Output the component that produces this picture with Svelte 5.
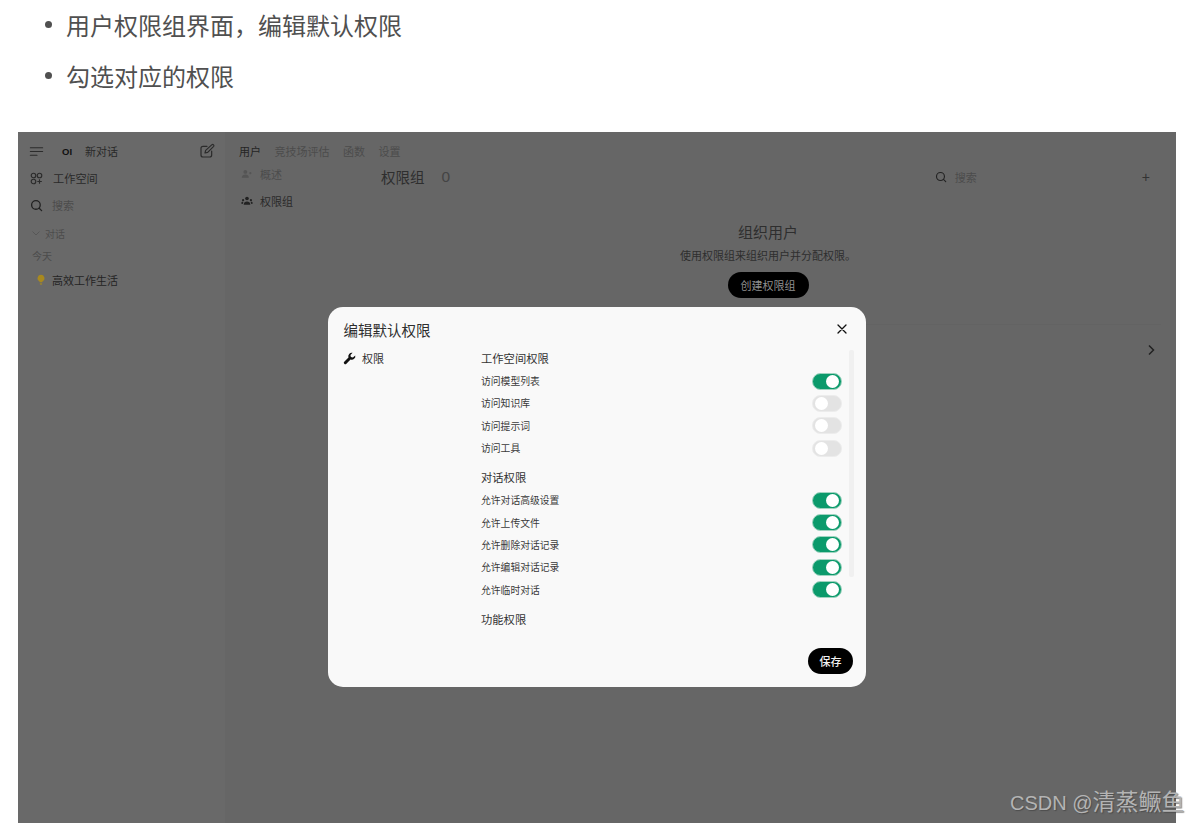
<script lang="ts">
  const workspacePerms = [
    { label: '访问模型列表', on: true },
    { label: '访问知识库', on: false },
    { label: '访问提示词', on: false },
    { label: '访问工具', on: false }
  ];
  const chatPerms = [
    { label: '允许对话高级设置', on: true },
    { label: '允许上传文件', on: true },
    { label: '允许删除对话记录', on: true },
    { label: '允许编辑对话记录', on: true },
    { label: '允许临时对话', on: true }
  ];
  const tabs = ['用户', '竞技场评估', '函数', '设置'];
</script>

<div class="page">
  <ul class="steps">
    <li>用户权限组界面，编辑默认权限</li>
    <li>勾选对应的权限</li>
  </ul>

  <div class="shot">
    <aside class="sidebar">
      <div class="side-top">
        <svg class="ico" viewBox="0 0 16 16" fill="none" stroke="#2b2b2b" stroke-width="1.3" stroke-linecap="round"><path d="M1.500 4h13M1.500 8h13M1.500 12h7" /></svg>
        <span class="logo">OI</span>
        <span class="new-chat">新对话</span>
        <svg class="edit" viewBox="0 0 24 24" fill="none" stroke="#2b2b2b" stroke-width="1.8" stroke-linecap="round" stroke-linejoin="round"><path d="M19 12v6a3 3 0 0 1-3 3H6a3 3 0 0 1-3-3V8a3 3 0 0 1 3-3h6" /><path d="M9 15l1-4L19.500 2.500a1.800 1.800 0 0 1 2.500 2.500L13 14z" /></svg>
      </div>
      <div class="side-row">
        <svg class="ico" viewBox="0 0 16 16" fill="none" stroke="#2b2b2b" stroke-width="1.4"><circle cx="4.300" cy="4.300" r="2.800" /><circle cx="11.700" cy="4.300" r="2.800" /><circle cx="4.300" cy="11.700" r="2.800" /><path d="M11.700 9v5.500M9 11.700h5.500" /></svg>
        <span>工作空间</span>
      </div>
      <div class="side-row search">
        <svg class="ico" viewBox="0 0 16 16" fill="none" stroke="#222" stroke-width="1.6" stroke-linecap="round"><circle cx="7.300" cy="7.300" r="5.300" /><path d="M11.300 11.300l3 3" /></svg>
        <span>搜索</span>
      </div>
      <div class="folder">
        <svg viewBox="0 0 10 10" fill="none" stroke="#555" stroke-width="0.9"><path d="M1.500 3.500L5 7l3.500-3.500" /></svg>
        <span>对话</span>
      </div>
      <div class="today">今天</div>
      <div class="chat-item">
        <svg viewBox="0 0 10 14"><path d="M5 .5a4.300 4.300 0 0 0-2.500 7.800c.5.400.8.900.9 1.500h3.200c.1-.6.400-1.100.9-1.500A4.300 4.300 0 0 0 5 .5z" fill="#a8891f" /><rect x="3.500" y="10.300" width="3" height="3" rx="1" fill="#8f7d3c" /></svg>
        <span>高效工作生活</span>
      </div>
    </aside>

    <main class="main">
      <nav class="tabs">
        {#each tabs as tab, i}
          <span class:active={i === 0}>{tab}</span>
        {/each}
      </nav>
      <div class="body">
        <div class="sub-nav">
          <div class="sub-item faded">
            <svg viewBox="0 0 14 12" fill="#555"><circle cx="5" cy="3.500" r="2.300" /><path d="M.8 10.500c0-2.400 1.900-3.800 4.200-3.800s4.200 1.400 4.200 3.800z" /><circle cx="11" cy="5" r="1.300" /></svg>
            <span>概述</span>
          </div>
          <div class="sub-item">
            <svg viewBox="0 0 14 12" fill="#222"><circle cx="7" cy="3" r="2.200" /><path d="M3 10.500c0-2.600 1.800-3.800 4-3.800s4 1.200 4 3.800z" /><circle cx="2.300" cy="5" r="1.300" /><circle cx="11.700" cy="5" r="1.300" /><path d="M0 9c0-1.200.8-2 2-2l.6.3L2 9.500zM14 9c0-1.200-.8-2-2-2l-.6.3.6 2.200z" /></svg>
            <span>权限组</span>
          </div>
        </div>
        <div class="content">
          <header class="content-head">
            <h2>权限组</h2>
            <span class="count">0</span>
            <div class="head-search">
              <svg class="ico small" viewBox="0 0 16 16" fill="none" stroke="#222" stroke-width="1.500" stroke-linecap="round"><circle cx="7.300" cy="7.300" r="5.300" /><path d="M11.300 11.300l3 3" /></svg>
              <span>搜索</span>
            </div>
            <span class="plus">+</span>
          </header>
          <section class="empty">
            <h3>组织用户</h3>
            <p>使用权限组来组织用户并分配权限。</p>
            <span class="create">创建权限组</span>
          </section>
          <div class="divider"></div>
          <svg class="chevron" viewBox="0 0 10 14" fill="none" stroke="#222" stroke-width="1.500"><path d="M3 2.500L7.500 7 3 11.500" /></svg>
        </div>
      </div>
    </main>

    <div class="modal">
      <header class="modal-head">
        <h1>编辑默认权限</h1>
        <svg viewBox="0 0 12 12" fill="none" stroke="#111" stroke-width="1.300" stroke-linecap="round"><path d="M2 2l8 8M10 2l-8 8" /></svg>
      </header>
      <div class="modal-body">
        <div class="modal-nav">
          <svg viewBox="0 0 24 24" fill="#111"><path d="M22.600 6.300a6.500 6.500 0 0 1-8.700 7.500L6.300 21.700a2.700 2.700 0 0 1-4-3.900l7.800-7.700a6.500 6.500 0 0 1 7.600-8.500l-4 4 .8 3.800 3.800.8z" /></svg>
          <span>权限</span>
        </div>
        <div class="perms">
          <div class="group-title">工作空间权限</div>
          <div class="rows">
            {#each workspacePerms as perm}
              <div class="row">
                <span>{perm.label}</span>
                <span class="toggle" class:on={perm.on}><i></i></span>
              </div>
            {/each}
          </div>
          <div class="group-title second">对话权限</div>
          <div class="rows">
            {#each chatPerms as perm}
              <div class="row">
                <span>{perm.label}</span>
                <span class="toggle" class:on={perm.on}><i></i></span>
              </div>
            {/each}
          </div>
          <div class="group-title third">功能权限</div>
          <div class="scrollbar"></div>
        </div>
      </div>
      <footer class="modal-foot">
        <span class="save">保存</span>
      </footer>
    </div>
  </div>

  <div class="watermark">CSDN @<span>清蒸鳜鱼</span></div>
</div>

<style>
  :global(body) {
    background: #fff;
    overflow: hidden;
  }

  .page {
    position: relative;
    width: 1189px;
    height: 823px;
    overflow: hidden;
    font-family: "Noto Sans CJK SC", "Liberation Sans", sans-serif;
  }

  .steps {
    margin: -1px 0 0;
    padding: 0 0 0 45px;
    height: 133px;
    box-sizing: border-box;
    list-style: none;
    color: #505050;
    font-size: 24px;
    line-height: 51px;
  }

  .steps li {
    display: flex;
    align-items: center;
    gap: 14px;
  }

  .steps li::before {
    content: '';
    flex: none;
    width: 7px;
    height: 7px;
    border-radius: 50%;
    background: #505050;
  }

  .shot {
    position: relative;
    display: flex;
    width: 1158px;
    height: 691px;
    background: #666;
    margin-left: 18px;
    color: #222;
    font-size: 11px;
  }

  .sidebar {
    flex: 0 0 207px;
    box-sizing: border-box;
    padding: 11px 11px 0 11px;
    background: #696969;
  }

  .side-top {
    display: flex;
    align-items: center;
    height: 16px;
    color: #2a2a2a;
  }

  .ico {
    flex: none;
    width: 15px;
    height: 15px;
  }

  .ico.small {
    width: 12px;
    height: 12px;
  }

  .logo {
    margin-left: 18px;
    font-family: "Liberation Sans", sans-serif;
    font-size: 9.500px;
    font-weight: 700;
    color: #111;
  }

  .new-chat {
    margin-left: 13px;
  }

  .edit {
    width: 16px;
    height: 16px;
    margin-left: auto;
    margin-right: -1px;
  }

  .side-row {
    display: flex;
    align-items: center;
    gap: 10px;
    height: 16px;
    margin-top: 11px;
    color: #2a2a2a;
    font-size: 11.200px;
  }

  .side-row .ico {
    width: 13px;
    height: 13px;
    margin-left: 1px;
  }

  .side-row.search {
    gap: 9px;
    color: #4c4c4c;
    font-size: 11px;
  }

  .folder {
    display: flex;
    align-items: center;
    gap: 4px;
    margin-top: 13px;
    height: 14px;
    color: #4c4c4c;
    font-size: 10px;
    padding-left: 2px;
  }

  .folder svg {
    width: 10px;
    height: 10px;
  }

  .today {
    margin: 9px 0 0 3px;
    height: 14px;
    line-height: 14px;
    color: #4c4c4c;
    font-size: 10px;
  }

  .chat-item {
    display: flex;
    align-items: center;
    gap: 7px;
    margin: 9px 0 0 8px;
    height: 16px;
    color: #242424;
  }

  .chat-item svg {
    width: 8px;
    height: 12px;
  }

  .main {
    flex: 1;
    min-width: 0;
    padding: 11px 0 0 14px;
  }

  .tabs {
    display: flex;
    gap: 13.500px;
    height: 16px;
    align-items: center;
    color: #4c4c4c;
  }

  .tabs .active {
    color: #242424;
  }

  .body {
    display: flex;
    margin-top: 6px;
  }

  .sub-nav {
    flex: 0 0 142px;
    padding-top: 1px;
  }

  .sub-item {
    display: flex;
    align-items: center;
    gap: 7px;
    height: 16px;
    margin: 0 0 11px 2px;
    color: #2a2a2a;
  }

  .sub-item.faded {
    color: #4c4c4c;
  }

  .sub-item svg {
    width: 12px;
    height: 10px;
  }

  .content {
    position: relative;
    flex: 1;
    min-width: 0;
    padding: 1px 26px 0 0;
  }

  .content-head {
    display: flex;
    align-items: center;
    height: 20px;
  }

  .content-head h2 {
    margin: 0;
    font-size: 14.500px;
    font-weight: 400;
    color: #2e2e2e;
  }

  .count {
    margin: 2px 0 0 17px;
    font-size: 15.500px;
    color: #444;
    font-family: "Liberation Sans", sans-serif;
  }

  .head-search {
    display: flex;
    align-items: center;
    gap: 8px;
    margin: 2px 165px 0 auto;
    color: #4c4c4c;
  }

  .plus {
    margin-top: 1px;
    font-size: 14px;
    color: #333;
    font-family: "Liberation Sans", sans-serif;
    font-weight: 300;
  }

  .empty {
    display: flex;
    flex-direction: column;
    align-items: center;
    width: 774px;
    margin-top: 35px;
  }

  .empty h3 {
    margin: 0;
    font-size: 15px;
    font-weight: 400;
    line-height: 22px;
    color: #2e2e2e;
  }

  .empty p {
    margin: 4px 0 0;
    font-size: 11px;
    line-height: 16px;
    color: #2e2e2e;
  }

  .create {
    margin-top: 9px;
    padding: 0 13px;
    height: 26px;
    line-height: 26px;
    border-radius: 13px;
    background: #000;
    color: #8f8f8f;
    font-size: 11px;
  }

  .divider {
    height: 1px;
    margin-top: 26px;
    width: 780px;
    background: #636363;
  }

  .chevron {
    display: block;
    width: 10px;
    height: 14px;
    margin: 18px 0 0 765px;
  }

  .modal {
    position: absolute;
    left: 310px;
    top: 175px;
    display: flex;
    flex-direction: column;
    width: 538px;
    height: 380px;
    box-sizing: border-box;
    border-radius: 15px;
    background: #f9f9f9;
    color: #333;
  }

  .modal-head {
    display: flex;
    align-items: center;
    justify-content: space-between;
    height: 20px;
    padding: 14px 18px 0 16px;
    margin-top: -2px;
  }

  .modal-head h1 {
    margin: 0 0 0 -0.500px;
    font-size: 14.500px;
    font-weight: 400;
    color: #2e2e2e;
  }

  .modal-head svg {
    width: 12px;
    height: 12px;
  }

  .modal-body {
    display: flex;
    flex: 1;
    min-height: 0;
    padding: 10px 0 0 15px;
  }

  .modal-nav {
    display: flex;
    align-items: center;
    gap: 6px;
    flex: 0 0 138px;
    height: 18px;
    font-size: 11px;
    color: #333;
  }

  .modal-nav svg {
    width: 13px;
    height: 13px;
  }

  .perms {
    position: relative;
    width: 361px;
  }

  .group-title {
    height: 18px;
    line-height: 18px;
    font-size: 11.300px;
    color: #333;
  }

  .group-title.second,
  .group-title.third {
    margin-top: 12px;
  }

  .rows {
    display: flex;
    flex-direction: column;
    gap: 6.400px;
    margin-top: 6px;
  }

  .row {
    display: flex;
    align-items: center;
    justify-content: space-between;
    height: 16px;
    font-size: 9.800px;
    color: #3a3a3a;
  }

  .toggle {
    display: flex;
    align-items: center;
    width: 30px;
    height: 17px;
    box-sizing: border-box;
    padding: 0 2px;
    border-radius: 9px;
    background: #e3e3e3;
    border: 1px solid #ececec;
  }

  .toggle i {
    display: block;
    width: 13px;
    height: 13px;
    border-radius: 50%;
    background: #fff;
  }

  .toggle.on {
    justify-content: flex-end;
    background: #0b9a6b;
    border-color: #9fd4c0;
  }

  .scrollbar {
    position: absolute;
    top: 1px;
    right: -12px;
    width: 5px;
    height: 227px;
    border-radius: 2px;
    background: #f0f0f0;
  }

  .modal-foot {
    display: flex;
    justify-content: flex-end;
    padding: 0 13px 13px 0;
  }

  .save {
    width: 45px;
    height: 26px;
    line-height: 26px;
    text-align: center;
    border-radius: 13px;
    background: #000;
    color: #f2f2f2;
    font-size: 11px;
    font-weight: 500;
  }

  .watermark {
    position: absolute;
    left: 1010px;
    top: 788px;
    color: #b4b4b4;
    font-family: "Liberation Sans", "Noto Sans CJK SC", sans-serif;
    font-size: 20px;
    line-height: 28px;
    white-space: nowrap;
    text-shadow: 1px 1px 1px rgba(60, 60, 60, 0.6);
  }

  .watermark span {
    font-size: 23px;
  }
</style>
